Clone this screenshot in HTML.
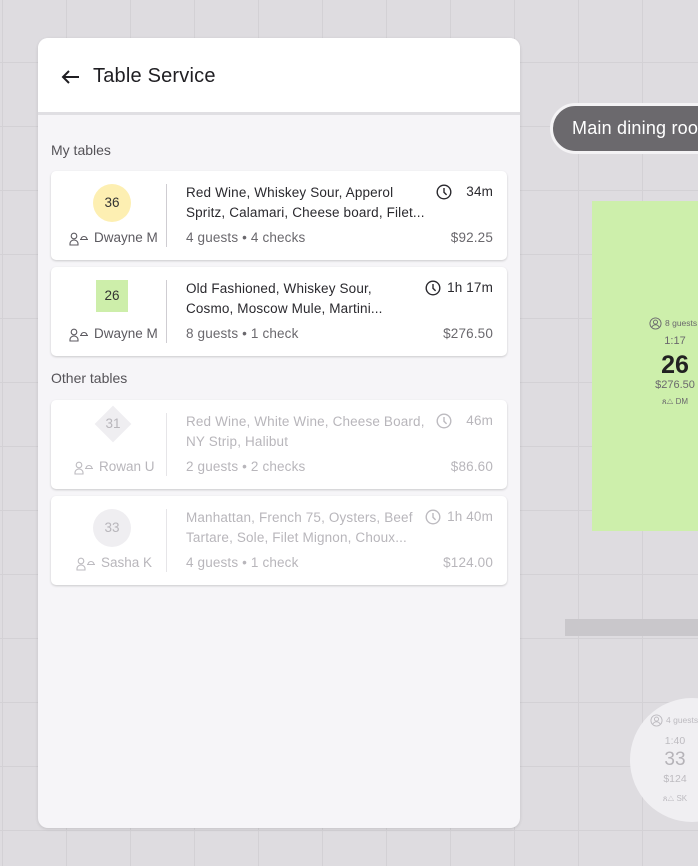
<!DOCTYPE html>
<html><head><meta charset="utf-8"><style>
*{box-sizing:border-box;margin:0;padding:0}
body{width:698px;height:866px;overflow:hidden;position:relative;font-family:"Liberation Sans",Roboto,sans-serif;
background-color:#dedce0;
background-image:linear-gradient(to right,#d3d1d5 1px,transparent 1px),linear-gradient(to bottom,#d3d1d5 1px,transparent 1px);
background-size:64px 64px;background-position:2px 62px;}
.a{position:absolute}
.panel{left:38px;top:38px;width:482px;height:790px;background:#f6f5f8;border-radius:10px;overflow:hidden;box-shadow:0 1px 3px rgba(0,0,0,.12)}
.hdr{left:0;top:0;width:482px;height:77px;background:#fff;border-bottom:3px solid #e0dfe3}
.title{left:55px;top:27px;font-size:20px;color:#1f1e22;letter-spacing:0.2px}
.sec{left:13px;font-size:14px;color:#555358}
.card{left:13px;width:456px;height:89px;background:#fff;border-radius:5px;box-shadow:0 1px 2px rgba(0,0,0,.18)}
.div{left:115px;top:13px;width:1px;height:63px;background:#cfcdd2}
.t{font-size:13.5px;color:#2a292e;line-height:20px;letter-spacing:0.15px}
.s{font-size:13.5px;color:#6a686d;letter-spacing:0.15px}
.name{font-size:13.5px;color:#5c5a60;top:59px;}
.dim .t,.dim .s,.dim .name{color:#b8b6bb}
.dim svg{stroke:#bdbbc0}
</style></head><body>
<div class="a panel">
 <div class="a hdr">
  <svg class="a" style="left:22px;top:31px" width="20" height="16" viewBox="0 0 20 16" fill="none" stroke="#1f1e22" stroke-width="2"><path d="M19 8H3M9 2L3 8l6 6"/></svg>
  <div class="a title">Table Service</div>
 </div>
 <div class="a sec" style="top:104px">My tables</div>
 <div class="a sec" style="top:332px">Other tables</div>

 <div class="a card" style="top:133px">
  <div class="a" style="left:42px;top:13px;width:38px;height:38px;border-radius:50%;background:#fdefb2;font-size:13.5px;color:#333;text-align:center;line-height:38px">36</div>
  <svg class="a" style="left:18px;top:61px" width="20" height="14" viewBox="0 0 20 14" fill="none" stroke="#5c5a60" stroke-width="1.1"><circle cx="5" cy="4" r="2.8"/><path d="M1 13v-1.5c0-2 2-3.5 4-3.5s4 1.5 4 3.5V13zM11 7.5h8M12 7.5a3 3 0 0 1 6 0M15 4v.5"/></svg>
  <div class="a name" style="left:43px">Dwayne M</div>
  <div class="a div"></div>
  <div class="a t" style="left:135px;top:12px;width:245px">Red Wine, Whiskey Sour, Apperol Spritz, Calamari, Cheese board, Filet...</div>
  <svg class="a" style="left:385px;top:13px" width="16" height="16" viewBox="0 0 16 16" fill="none" stroke="#2a292e" stroke-width="1.4"><circle cx="8" cy="8" r="6.8"/><path d="M8 4v4.3l2.6 2.6"/></svg>
  <div class="a t" style="right:14px;top:11px">34m</div>
  <div class="a s" style="left:135px;top:59px">4 guests • 4 checks</div>
  <div class="a s" style="right:14px;top:59px">$92.25</div>
 </div>
 <div class="a card" style="top:229px">
  <div class="a" style="left:45px;top:13px;width:32px;height:32px;background:#cdeeaa;font-size:13.5px;color:#333;text-align:center;line-height:32px">26</div>
  <svg class="a" style="left:18px;top:61px" width="20" height="14" viewBox="0 0 20 14" fill="none" stroke="#5c5a60" stroke-width="1.1"><circle cx="5" cy="4" r="2.8"/><path d="M1 13v-1.5c0-2 2-3.5 4-3.5s4 1.5 4 3.5V13zM11 7.5h8M12 7.5a3 3 0 0 1 6 0M15 4v.5"/></svg>
  <div class="a name" style="left:43px">Dwayne M</div>
  <div class="a div"></div>
  <div class="a t" style="left:135px;top:12px;width:230px">Old Fashioned, Whiskey Sour, Cosmo, Moscow Mule, Martini...</div>
  <svg class="a" style="left:374px;top:13px" width="16" height="16" viewBox="0 0 16 16" fill="none" stroke="#2a292e" stroke-width="1.4"><circle cx="8" cy="8" r="6.8"/><path d="M8 4v4.3l2.6 2.6"/></svg>
  <div class="a t" style="right:14px;top:11px">1h 17m</div>
  <div class="a s" style="left:135px;top:59px">8 guests • 1 check</div>
  <div class="a s" style="right:14px;top:59px">$276.50</div>
 </div>
 <div class="a card dim" style="top:362px">
  <div class="a" style="left:49px;top:11px;width:26px;height:26px;background:#efeef1;transform:rotate(45deg)"></div>
  <div class="a" style="left:42px;top:14px;width:40px;text-align:center;font-size:13.5px;color:#b8b6bb;line-height:20px">31</div>
  <svg class="a" style="left:23px;top:61px" width="20" height="14" viewBox="0 0 20 14" fill="none" stroke-width="1.1"><circle cx="5" cy="4" r="2.8"/><path d="M1 13v-1.5c0-2 2-3.5 4-3.5s4 1.5 4 3.5V13zM11 7.5h8M12 7.5a3 3 0 0 1 6 0M15 4v.5"/></svg>
  <div class="a name" style="left:48px">Rowan U</div>
  <div class="a div" style="background:#e6e5e8"></div>
  <div class="a t" style="left:135px;top:12px;width:245px">Red Wine, White Wine, Cheese Board, NY Strip, Halibut</div>
  <svg class="a" style="left:385px;top:13px" width="16" height="16" viewBox="0 0 16 16" fill="none" stroke-width="1.4"><circle cx="8" cy="8" r="6.8"/><path d="M8 4v4.3l2.6 2.6"/></svg>
  <div class="a t" style="right:14px;top:11px">46m</div>
  <div class="a s" style="left:135px;top:59px">2 guests • 2 checks</div>
  <div class="a s" style="right:14px;top:59px">$86.60</div>
 </div>
 <div class="a card dim" style="top:458px">
  <div class="a" style="left:42px;top:13px;width:38px;height:38px;border-radius:50%;background:#efeef1;font-size:13.5px;color:#b8b6bb;text-align:center;line-height:38px">33</div>
  <svg class="a" style="left:25px;top:61px" width="20" height="14" viewBox="0 0 20 14" fill="none" stroke-width="1.1"><circle cx="5" cy="4" r="2.8"/><path d="M1 13v-1.5c0-2 2-3.5 4-3.5s4 1.5 4 3.5V13zM11 7.5h8M12 7.5a3 3 0 0 1 6 0M15 4v.5"/></svg>
  <div class="a name" style="left:50px">Sasha K</div>
  <div class="a div" style="background:#e6e5e8"></div>
  <div class="a t" style="left:135px;top:12px;width:240px">Manhattan, French 75, Oysters, Beef Tartare, Sole, Filet Mignon, Choux...</div>
  <svg class="a" style="left:374px;top:13px" width="16" height="16" viewBox="0 0 16 16" fill="none" stroke-width="1.4"><circle cx="8" cy="8" r="6.8"/><path d="M8 4v4.3l2.6 2.6"/></svg>
  <div class="a t" style="right:14px;top:11px">1h 40m</div>
  <div class="a s" style="left:135px;top:59px">4 guests • 1 check</div>
  <div class="a s" style="right:14px;top:59px">$124.00</div>
 </div>
</div>

<div class="a" style="left:550px;top:103px;width:200px;height:51px;border-radius:26px;background:#6b696d;border:3px solid #f4f3f5"></div>
<div class="a" style="left:572px;top:118px;font-size:18px;color:#fff;white-space:nowrap;letter-spacing:0.2px">Main dining room</div>

<div class="a" style="left:592px;top:201px;width:120px;height:330px;background:#cdefab"></div>
<svg class="a" style="left:649px;top:317px" width="13" height="13" viewBox="0 0 14 14" fill="none" stroke="#6a686d" stroke-width="1"><circle cx="7" cy="7" r="6"/><circle cx="7" cy="5.5" r="2.2"/><path d="M3 11c1-2 2.5-2.6 4-2.6s3 .6 4 2.6"/></svg>
<div class="a" style="left:665px;top:318px;font-size:8.5px;color:#6a686d;white-space:nowrap">8 guests</div>
<div class="a" style="left:650px;top:335px;width:50px;text-align:center;font-size:11px;color:#6a686d">1:17</div>
<div class="a" style="left:645px;top:351px;width:60px;text-align:center;font-size:25px;font-weight:bold;color:#222">26</div>
<div class="a" style="left:645px;top:379px;width:60px;text-align:center;font-size:11px;color:#6a686d">$276.50</div>
<div class="a" style="left:645px;top:397px;width:60px;text-align:center;font-size:8px;color:#6a686d">ጸ△ DM</div>

<div class="a" style="left:565px;top:619px;width:140px;height:17px;background:#c9c7cb"></div>

<div class="a" style="left:630px;top:698px;width:124px;height:124px;border-radius:50%;background:#f0eff2"></div>
<svg class="a" style="left:650px;top:714px" width="13" height="13" viewBox="0 0 14 14" fill="none" stroke="#bdbbc0" stroke-width="1"><circle cx="7" cy="7" r="6"/><circle cx="7" cy="5.5" r="2.2"/><path d="M3 11c1-2 2.5-2.6 4-2.6s3 .6 4 2.6"/></svg>
<div class="a" style="left:666px;top:715px;font-size:8.5px;color:#bdbbc0;white-space:nowrap">4 guests</div>
<div class="a" style="left:650px;top:735px;width:50px;text-align:center;font-size:10.5px;color:#bdbbc0">1:40</div>
<div class="a" style="left:645px;top:749px;width:60px;text-align:center;font-size:19px;color:#b5b3b8">33</div>
<div class="a" style="left:645px;top:773px;width:60px;text-align:center;font-size:10.5px;color:#bdbbc0">$124</div>
<div class="a" style="left:645px;top:794px;width:60px;text-align:center;font-size:8px;color:#bdbbc0">ጸ△ SK</div>
</body></html>
